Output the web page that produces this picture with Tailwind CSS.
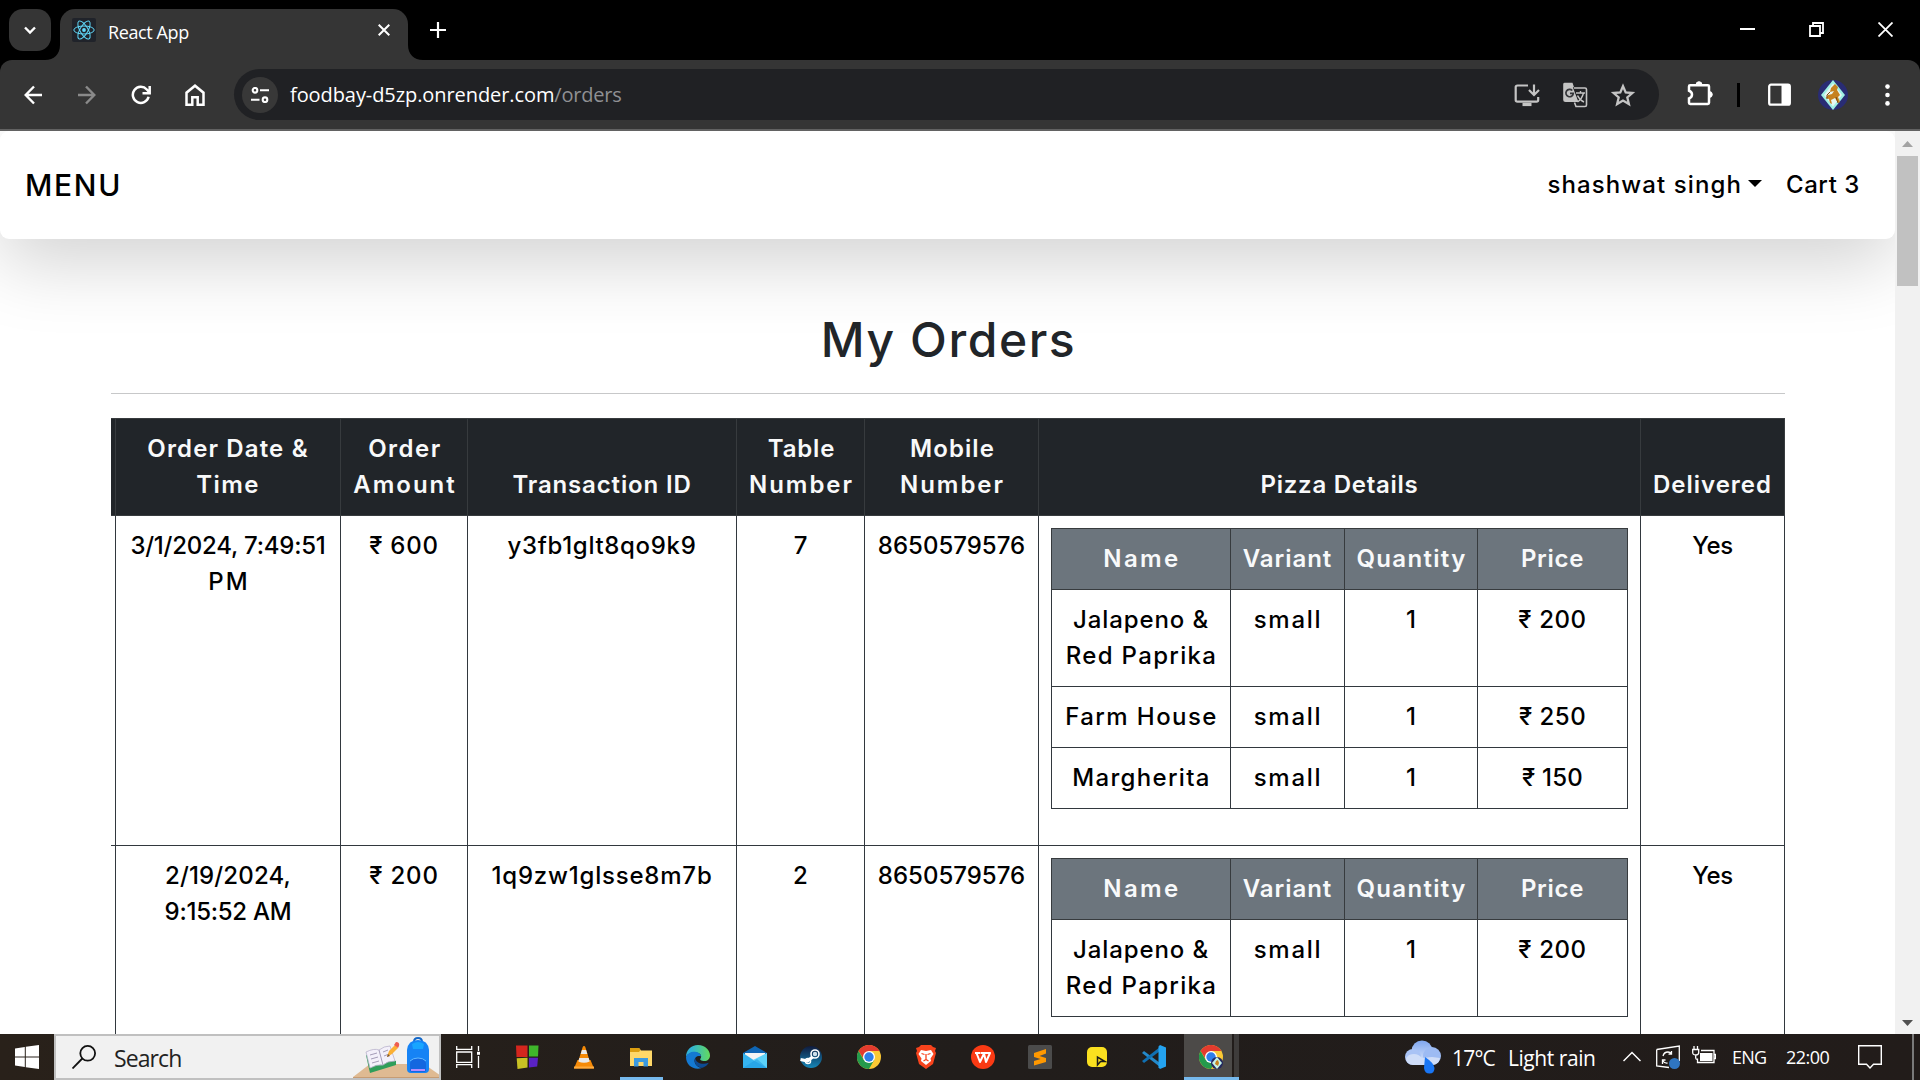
<!DOCTYPE html>
<html lang="en">
<head>
<meta charset="utf-8">
<title>React App</title>
<script src="https://cdn.jsdelivr.net/npm/@tailwindcss/browser@4"></script>
</head>
<body class="flex h-[1080px] w-[1920px] flex-col overflow-hidden bg-white font-['Open_Sans',sans-serif]">

<!-- Tab strip -->
<header class="flex h-[60px] shrink-0 bg-black text-white">
  <button class="mt-[9px] ml-[9px] flex h-[42px] w-[42px] items-center justify-center rounded-[14px] bg-[#353535]">
    <svg class="size-4" viewBox="0 0 16 16" fill="none" stroke="#fff" stroke-width="2.4"><path d="M3 5.500l5 5 5-5"/></svg>
  </button>
  <svg class="mt-[45px] -ml-[6px] h-[15px] w-[15px]" viewBox="0 0 15 15"><path d="M15 0V15H0C9 15 15 9 15 0z" fill="#353535"/></svg>
  <div class="mt-[9px] flex h-[51px] w-[348px] items-start rounded-t-[15px] bg-[#353535] pt-[9px] pl-3">
    <svg class="h-6 w-6" viewBox="0 0 24 24" fill="none" stroke="#61dafb"><rect width="24" height="24" rx="2" fill="#20232a" stroke="none"/><ellipse cx="12" cy="12" rx="10.200" ry="4"/><ellipse cx="12" cy="12" rx="10.200" ry="4" transform="rotate(60 12 12)"/><ellipse cx="12" cy="12" rx="10.200" ry="4" transform="rotate(120 12 12)"/><circle cx="12" cy="12" r="1.900" fill="#61dafb" stroke="none"/></svg>
    <span class="ml-3 text-[18px] leading-7 tracking-[-0.400px]">React App</span>
    <svg class="mt-[6px] mr-[18px] ml-auto size-3" viewBox="0 0 12 12" stroke="#fff" stroke-width="2"><path d="M.7.7l10.600 10.600M11.300.7L.7 11.300"/></svg>
  </div>
  <svg class="mt-[45px] h-[15px] w-[15px]" viewBox="0 0 15 15"><path d="M0 0V15H15C6 15 0 9 0 0z" fill="#353535"/></svg>
  <svg class="mt-[22px] ml-[7px] size-4" viewBox="0 0 16 16" stroke="#fff" stroke-width="2.200"><path d="M8 0v16M0 8h16"/></svg>
  <div class="mt-[22px] mr-[27px] ml-auto flex gap-[54px]">
    <svg class="size-[15px]" viewBox="0 0 15 15" stroke="#fff" stroke-width="2"><path d="M0 7h15"/></svg>
    <svg class="size-[15px]" viewBox="0 0 15 15" fill="none" stroke="#fff" stroke-width="1.800"><path d="M1 4h10v10H1zM4 4V1h10v10h-3"/></svg>
    <svg class="size-[15px]" viewBox="0 0 15 15" stroke="#fff" stroke-width="1.800"><path d="M.5.5l14 14M14.500.5l-14 14"/></svg>
  </div>
</header>

<!-- Toolbar -->
<div class="h-[71px] shrink-0 bg-black">
<div class="flex h-[71px] items-center rounded-t-[12px] border-b-2 border-[#626262] bg-[#353535]">
  <svg class="ml-[24px] h-5 w-[18px]" viewBox="0 0 18 20" fill="none" stroke="#fff" stroke-width="2.400"><path d="M18 10H2M10 1.500L1.700 10 10 18.500"/></svg>
  <svg class="ml-[36px] h-5 w-[18px]" viewBox="0 0 18 20" fill="none" stroke="#8a8a8a" stroke-width="2.400"><path d="M0 10h16M8 1.500l8.300 8.500L8 18.500"/></svg>
  <svg class="ml-[35px] size-5" viewBox="0 0 20 20" fill="none" stroke="#fff" stroke-width="2.500"><path d="M17.600 11.800A8 8 0 1 1 15.800 4.500L18 7M18.700 1v7.200h-7.200"/></svg>
  <svg class="ml-[34px] h-[22px] w-5" viewBox="0 0 20 22" fill="none" stroke="#fff" stroke-width="2.500"><path d="M1.500 20.700V8.700L10 1.700l8.500 7v12h-5.800v-7.400H7.300v7.400z"/></svg>
  <div class="ml-[29px] flex h-[51px] w-[1425px] items-center rounded-full bg-[#202124] pl-2">
    <div class="flex size-9 items-center justify-center rounded-full bg-[#383838]">
      <svg class="h-4 w-[18px]" viewBox="0 0 18 16" fill="none" stroke="#fff" stroke-width="2.100"><circle cx="4" cy="3.300" r="2.300"/><path d="M9 3.300h9M0 12.700h8.500"/><circle cx="14" cy="12.700" r="2.300"/></svg>
    </div>
    <span class="ml-[12px] text-[20px] leading-7 tracking-[-0.080px] text-white">foodbay-d5zp.onrender.com<span class="tracking-[-0.200px] text-[#8f9093]">/orders</span></span>
    <svg class="mr-[22px] ml-auto h-[24px] w-[26px]" viewBox="0 0 26 24" fill="none" stroke="#c4c4c4" stroke-width="2.200"><path d="M14 2.500H3.500Q1.700 2.500 1.700 4v13q0 1.600 1.800 1.600h19q1.700 0 1.700-1.600v-3M20 1.500v9.700M15 7l5 5 5-5"/><path d="M8.500 21.500h9" stroke-width="3.200"/></svg>
    <svg class="mr-[22px] size-[26px]" viewBox="0 0 26 26"><path d="M2.500.8h8L17 20H3.500Q1.200 20 1.200 18V2.500Q1 .8 2.500.8z" fill="#c4c4c4"/><path d="M10.800 5.300H24.500V24.500H14l-2-4.500h4.500z" fill="#202124"/><path d="M12 6h11q1.500 0 1.500 1.500V23q0 1.500-1.500 1.500h-9l-1.500-4" fill="none" stroke="#c4c4c4" stroke-width="1.600"/><path d="M14 11h9M18.500 9v2M21.500 11q-1.500 6-6 9M15.500 13.500q2 4.500 6.500 6.500" fill="none" stroke="#c4c4c4" stroke-width="1.400"/><path d="M10.300 8.500A3.700 3.700 0 1 0 11.300 11.400H8" fill="none" stroke="#35363a" stroke-width="1.700"/></svg>
    <svg class="mr-[23px] h-6 w-[26px]" viewBox="0 0 26 24" fill="none" stroke="#c4c4c4" stroke-width="2.300"><path d="M13 3.200l2.700 6.200 6.700.6-5.100 4.400 1.600 6.600-5.900-3.500L7.100 21l1.600-6.600L3.600 10l6.700-.6z"/></svg>
  </div>
  <svg class="-mt-[2px] ml-[27px] size-[27px]" viewBox="0 0 27 27" fill="none" stroke="#fff" stroke-width="2.500"><path d="M4.200 5.200h17.600q1.200 0 1.200 1.200v16.400q0 1.200-1.200 1.200H4.200Q3 24 3 22.800v-4.300q3-1 3-3.900t-3-3.900V6.400q0-1.200 1.200-1.200z"/><path d="M10 5a3 3.300 0 0 1 6 0zM23 11.500a3.300 3 0 0 1 0 6z" fill="#fff" stroke-width="1"/></svg>
  <span class="ml-[24px] h-6 w-[3px] bg-black"></span>
  <svg class="ml-[28px] h-[23px] w-[23px]" viewBox="0 0 23 23"><rect x="1.200" y="1.700" width="20.600" height="20" rx="1.800" fill="none" stroke="#fff" stroke-width="2.300"/><path d="M13.500 2h8v19.500h-8z" fill="#fff"/></svg>
  <svg class="ml-[27px] size-[30px]" viewBox="0 0 30 30"><circle cx="15" cy="15" r="15" fill="#292c74"/><path d="M15 0l12 15-12 15L3 15z" fill="#9ff0e4"/><path d="M15 3.500L24 15l-9 11.500L6 15z" fill="#e6f7f2"/><path d="M13 8l4-4 3 3-1 3 3 5-2 2 2 5-2 1-3-5-4 2 1 4-2-1-1-4-3-1 2-3 4-1 2-3-4 1z" fill="#c6821f"/><path d="M12 12l-3 3v4M18 17l2 6" stroke="#7a4a12" fill="none"/></svg>
  <svg class="ml-[37px] h-[22px] w-[5px]" viewBox="0 0 5 22" fill="#fff"><circle cx="2.500" cy="2.600" r="2.300"/><circle cx="2.500" cy="11" r="2.300"/><circle cx="2.500" cy="19.400" r="2.300"/></svg>
</div>
</div>

<!-- Page -->
<div class="flex h-[903px] shrink-0 overflow-hidden">
  <main class="h-[903px] w-[1895px] overflow-hidden bg-white font-['Inter',sans-serif] text-[24px] leading-9 font-medium text-black">
    <nav class="flex h-[108px] items-center rounded-[9px] bg-white pr-[35px] pl-[25px] shadow-[0_24px_72px_rgba(0,0,0,0.175)]">
      <span class="text-[30px] tracking-[1.700px]">MENU</span>
      <span class="ml-auto tracking-[1.100px]">shashwat singh</span>
      <svg class="mt-[-3px] ml-[6px] h-[7px] w-[14px]" viewBox="0 0 14 7"><path d="M0 0h14L7 7z"/></svg>
      <span class="ml-[24px] tracking-[0.580px]">Cart 3</span>
    </nav>
    <h1 class="mt-[72px] pl-[2px] text-center text-[48px] leading-[58px] tracking-[1.600px] text-[#212529]">My Orders</h1>
    <hr class="mx-auto mt-[24px] h-px w-[1674px] border-0 bg-[#c7c8c9]">
    <table class="mt-[24px] ml-[111px] w-[1673.500px] table-fixed border-collapse text-center [&_td]:border [&_td]:border-[#32383e] [&_td]:p-3 [&_td]:align-top [&_th]:border [&_th]:border-[#373b3e] [&_th]:p-3 [&_th]:align-bottom [&_th]:font-semibold [&_th]:text-[#f8f9fa]">
      <colgroup><col class="w-[4.500px]"><col class="w-[225px]"><col class="w-[127px]"><col class="w-[269px]"><col class="w-[128px]"><col class="w-[174px]"><col class="w-[602px]"><col class="w-[144px]"></colgroup>
      <thead class="bg-[#212529]">
        <tr>
          <th class="border-l-0! p-0!"></th>
          <th><span class="tracking-[1.140px]">Order Date &amp;</span><br><span class="tracking-[1.400px]">Time</span></th>
          <th class="pr-1! pl-1.5!"><span class="tracking-[1.500px]">Order</span><br><span class="tracking-[2px]">Amount</span></th>
          <th><span class="tracking-[0.850px]">Transaction ID</span></th>
          <th class="pr-1! pl-1.5!"><span class="tracking-[0.820px]">Table</span><br><span class="tracking-[1.960px]">Number</span></th>
          <th class="pr-2.5!"><span class="tracking-[1.100px]">Mobile</span><br><span class="tracking-[1.960px]">Number</span></th>
          <th><span class="tracking-[0.720px]">Pizza Details</span></th>
          <th class="px-2!"><span class="tracking-[1px]">Delivered</span></th>
        </tr>
      </thead>
      <tbody>
        <tr>
          <td class="border-l-0! p-0!"></td>
          <td><span class="tracking-[-0.220px]">3/1/2024, 7:49:51</span><br><span class="-mr-[2px] tracking-[2.200px]">PM</span></td>
          <td><span class="tracking-[0.800px]">₹ 600</span></td>
          <td><span class="tracking-[0.670px]">y3fb1glt8qo9k9</span></td>
          <td>7</td>
          <td>8650579576</td>
          <td>
            <table class="mb-6 w-[576px] table-fixed border-collapse">
              <colgroup><col class="w-[179px]"><col class="w-[114px]"><col class="w-[133px]"><col class="w-[150px]"></colgroup>
              <thead class="bg-[#6c757d]"><tr>
                <th><span class="-mr-[2px] tracking-[2.400px]">Name</span></th><th class="px-1!"><span class="tracking-[0.950px]">Variant</span></th><th class="px-1!"><span class="-mr-px tracking-[1.330px]">Quantity</span></th><th><span class="tracking-[0.670px]">Price</span></th>
              </tr></thead>
              <tbody>
                <tr><td><span class="tracking-[0.890px]">Jalapeno &amp;</span><br><span class="-mr-px tracking-[1.320px]">Red Paprika</span></td><td><span class="-mr-px tracking-[1.720px]">small</span></td><td>1</td><td><span class="tracking-[0.600px]">₹ 200</span></td></tr>
                <tr><td><span class="-mr-px tracking-[1.420px]">Farm House</span></td><td><span class="-mr-px tracking-[1.720px]">small</span></td><td>1</td><td><span class="tracking-[0.500px]">₹ 250</span></td></tr>
                <tr><td><span class="-mr-px tracking-[1.320px]">Margherita</span></td><td><span class="-mr-px tracking-[1.720px]">small</span></td><td>1</td><td><span class="tracking-[0.250px]">₹ 150</span></td></tr>
              </tbody>
            </table>
          </td>
          <td><span class="tracking-[-0.350px]">Yes</span></td>
        </tr>
        <tr>
          <td class="border-l-0! p-0!"></td>
          <td><span class="tracking-[0.130px]">2/19/2024,</span><br><span class="tracking-[-0.260px]">9:15:52 AM</span></td>
          <td><span class="tracking-[0.800px]">₹ 200</span></td>
          <td><span class="tracking-[0.800px]">1q9zw1glsse8m7b</span></td>
          <td>2</td>
          <td>8650579576</td>
          <td>
            <table class="mb-6 w-[576px] table-fixed border-collapse">
              <colgroup><col class="w-[179px]"><col class="w-[114px]"><col class="w-[133px]"><col class="w-[150px]"></colgroup>
              <thead class="bg-[#6c757d]"><tr>
                <th><span class="-mr-[2px] tracking-[2.400px]">Name</span></th><th class="px-1!"><span class="tracking-[0.950px]">Variant</span></th><th class="px-1!"><span class="-mr-px tracking-[1.330px]">Quantity</span></th><th><span class="tracking-[0.670px]">Price</span></th>
              </tr></thead>
              <tbody>
                <tr><td><span class="tracking-[0.890px]">Jalapeno &amp;</span><br><span class="-mr-px tracking-[1.320px]">Red Paprika</span></td><td><span class="-mr-px tracking-[1.720px]">small</span></td><td>1</td><td><span class="tracking-[0.600px]">₹ 200</span></td></tr>
              </tbody>
            </table>
          </td>
          <td><span class="tracking-[-0.350px]">Yes</span></td>
        </tr>
      </tbody>
    </table>
  </main>
  <!-- Scrollbar -->
  <div class="flex w-[25px] flex-col items-center bg-[#f1f1f1]">
    <svg class="mt-[10px] h-[6px] w-[11px]" viewBox="0 0 11 6"><path d="M0 6h11L5.500 0z" fill="#a3a3a3"/></svg>
    <div class="mt-[9px] h-[130px] w-[21px] bg-[#c1c1c1]"></div>
    <svg class="mt-auto mb-[8px] h-[6px] w-[11px]" viewBox="0 0 11 6"><path d="M0 0h11L5.500 6z" fill="#505050"/></svg>
  </div>
</div>

<!-- Taskbar -->
<footer class="flex h-[46px] shrink-0 bg-linear-to-r from-[#29211a] via-[#211d1b] via-50% to-[#221c1a] text-white">
  <div class="flex w-[54px] items-center justify-center">
    <svg class="size-6" viewBox="0 0 24 24" fill="#fff"><path d="M0 3.400L9.800 2v9.400H0zM10.800 1.800L24 0v11.400H10.800zM0 12.400h9.800V22L0 20.600zM10.800 12.400H24V24l-13.200-1.800z"/></svg>
  </div>
  <div class="flex w-[387px] items-center overflow-hidden border-2 border-[#c0c0c0] bg-[#f1f1f1] pl-4">
    <svg class="size-6" viewBox="0 0 24 24" fill="none" stroke="#111" stroke-width="1.800"><circle cx="15.700" cy="8.300" r="7.400"/><path d="M10.300 13.500L.5 23.500"/></svg>
    <span class="mt-[2px] ml-[18px] text-[23px] leading-8 tracking-[-0.900px] text-[#222]">Search</span>
    <svg class="-mr-[2px] ml-auto h-[46px] w-[88px] shrink-0" viewBox="0 0 88 46">
      <path d="M0 43L17 30h54l17 12v4H0z" fill="#dfba92"/><path d="M0 43h88v3H0z" fill="#c69c74"/>
      <path d="M13 21l3 14 1 4 26-8v-4z" fill="#2f9e5a"/><path d="M13 18q8-4 13-2 5-4 11-4l5 15q-8 0-12 4-6-1-13 3z" fill="#f3f0fa" stroke="#b9b3cc" stroke-width=".8"/><path d="M26 16l4 15M17 21l7-2M18 25l7-2M19 29l7-2M30 18l5-2M31 22l5-2" stroke="#a59db8" stroke-width="1" fill="none"/>
      <path d="M34 23l2-6 6-6 3 3-6 6z" fill="#fbb034"/><path d="M34 23l1-3 2 2z" fill="#7a5230"/><path d="M41 11l2-3q4 0 3 4l-1 2z" fill="#ee5d50"/>
      <path d="M61 8q0-4 4-4t4 4" fill="none" stroke="#1267c9" stroke-width="2"/><path d="M54 16q1-10 11-10t11 10v19q0 4-4 4H58q-4 0-4-4z" fill="#1683f5"/><path d="M59 10q6-4 12 0l-1 5H60z" fill="#18a5ff"/><path d="M57 36v-6q0-6 8-6t8 6v6q0 2-3 2H60q-3 0-3-2z" fill="#1467e0"/><path d="M57 27q3-3 8-3t8 3" fill="none" stroke="#63b9ff"/><path d="M58 36h14" stroke="#b48cff" stroke-width="2"/>
    </svg>
  </div>
  <div class="flex w-[57px] items-center pl-[15px]">
    <svg class="size-6" viewBox="0 0 24 24" fill="none" stroke="#fff" stroke-width="1.300"><path d="M.7 1v3.300h15V1M.7 7h15v10.300h-15zM.7 23v-3.300h15V23M22.500 1v5M22.500 11v12"/><path d="M21 6.800h3v3h-3z" fill="#fff" stroke="none"/></svg>
  </div>
  <div class="flex [&>div]:flex [&>div]:w-[57px] [&>div]:items-center [&>div]:justify-center">
    <div><svg class="size-6" viewBox="0 0 24 24"><path d="M1 .5h11.500v11.500H1.500z" fill="#d4261e"/><path d="M14 .5h9.500l-.5 11h-9z" fill="#3fb62b"/><path d="M1.700 13.300l10.800-.5v9.700l-10 1.500z" fill="#c8c224"/><path d="M14 12.700h9l-.8 8.800-8.200 1z" fill="#5a22c4"/></svg></div>
    <div><svg class="size-6" viewBox="0 0 24 24"><path d="M5.500 15h13l3.500 8.500H2z" fill="#f58a07"/><path d="M2 21.500h20v2H2z" fill="#ffab3d"/><path d="M12 1q1 0 1.300 1l4.700 15q-6 3-12 0L10.700 2Q11 1 12 1z" fill="#f58a07"/><path d="M9.900 5h4.200l1.200 4H8.700zM7.300 13h9.400l1 3.500q-5.700 2.500-11.400 0z" fill="#e9e9e9"/></svg></div>
    <div class="relative"><svg class="size-6" viewBox="0 0 24 24"><path d="M1 3h9l2 2.500h11V21H1z" fill="#ffd869"/><path d="M1 3h9l1.500 2L10 7H1z" fill="#dd9f10"/><path d="M5 13h14v8.500h-4.500V17h-5v4.500H5z" fill="#3c9ae0"/></svg><i class="absolute bottom-0 left-[8px] h-[3px] w-[43px] bg-[#76b9ed]"></i></div>
    <div><svg class="size-6" viewBox="0 0 24 24"><defs><linearGradient id="wave"><stop offset=".2" stop-color="#2fb2d8"/><stop offset="1" stop-color="#63da5c"/></linearGradient></defs><path d="M0 12C0 5 5 0 12 0c7.500 0 12 5.500 12 10.500 0 3.500-2.500 5.500-5.500 5.500-3.500 0-5-1.200-4-2.500C16.500 10.500 14 8 10 7.500 5 7 1.500 8.500 0 12z" fill="url(#wave)"/><path d="M0 12C1 8.500 5 6.500 9 6.700c3.500.3 6 2.500 6 4.800-3-1.500-6.500.5-6.500 4 0 4 3.500 7.500 8 7.300C8 26 0 20.500 0 12z" fill="#1479d2"/><path d="M9.200 13c-2 5 2 9.500 7.300 9.800 3-1 5-3 6.300-5-6 2.500-13 .5-13.600-4.800z" fill="#0d4b94"/></svg></div>
    <div><svg class="size-6" viewBox="0 0 24 24"><path d="M0 8L12 1l12 7v5H0z" fill="#0f66b5"/><path d="M2 8h20v9H2z" fill="#f4f4f4"/><path d="M0 8l12 8L24 8v15H0z" fill="#35b4f0"/><path d="M24 8v15L10 15z" fill="#5cd2fa"/><path d="M0 23l14-9 10 9z" fill="#1b97e0" fill-opacity=".5"/></svg></div>
    <div><svg class="size-6" viewBox="0 0 24 24"><defs><linearGradient id="steam" x2="0" y2="1"><stop stop-color="#101a3c"/><stop offset="1" stop-color="#1587b8"/></linearGradient></defs><circle cx="11" cy="12" r="11" fill="url(#steam)"/><path d="M.500 14.500l7 1.500 5-4" stroke="#fff" stroke-width="3.200" fill="none"/><circle cx="15" cy="9" r="4" fill="none" stroke="#fff" stroke-width="1.600"/><circle cx="15" cy="9" r="2.200" fill="#cfe0ea"/><circle cx="8" cy="16" r="2.600" fill="none" stroke="#fff" stroke-width="1.400"/></svg></div>
    <div><svg class="size-6" viewBox="0 0 24 24"><circle cx="12" cy="12" r="12" fill="#fcc934"/><path d="M1.600 6A12 12 0 0 1 22.400 6H12L7 14.500z" fill="#e33b2e"/><path d="M1.600 6A12 12 0 0 0 12 24l5.200-9H6.800z" fill="#249a4c"/><circle cx="12" cy="12" r="6" fill="#fff"/><circle cx="12" cy="12" r="4.700" fill="#2f7de9"/></svg></div>
    <div><svg class="size-6" viewBox="0 0 24 24"><path d="M7 0h10l2 2 3 1-1 3 1 2-3 11-7 5-7-5L2 8l1-2-1-3 3-1z" fill="#f8431c"/><path d="M7 5l5 1 5-1 2.500 4-3 4.500.5 2.500-5 4-5-4 .5-2.500-3-4.500z" fill="#fff"/><path d="M7.500 8.500l3 1M16.500 8.500l-3 1M12 9v5M9.500 16l2.500-1.500 2.500 1.500" stroke="#f8431c" stroke-width="1.300" fill="none"/></svg></div>
    <div><svg class="size-6" viewBox="0 0 24 24"><circle cx="12" cy="12" r="12" fill="#fa3a14"/><path d="M4 8h5M5.500 8L9 17l4-8.500 2 8.500 4-9h-9.500" fill="none" stroke="#fff" stroke-width="2" stroke-linejoin="round"/></svg></div>
    <div><svg class="size-6" viewBox="0 0 24 24"><rect width="24" height="24" rx="1.500" fill="#4b4b4b"/><path d="M18 4v4.500L11.500 11l6.500 2v4L6 20.500V16l6.500-2L6 12V8z" fill="#ff9800"/></svg></div>
    <div><svg class="size-6" viewBox="0 0 24 24"><rect x="2" y="2" width="20" height="20" rx="5" fill="#fae01f"/><path d="M12.500 12v8l3-3.500h4.500z" fill="none" stroke="#1a1a1a" stroke-width="1.500"/></svg></div>
    <div><svg class="size-6" viewBox="0 0 24 24"><path d="M0 8l2-2 16 12v4z" fill="#2489ca"/><path d="M0 16l2 2L18 6V2z" fill="#1070b3"/><path d="M18 0l6 2.500v19L18 24l-1.500-1.500v-21z" fill="#24a3f0"/></svg></div>
  </div>
  <div class="relative ml-[2px] flex w-12 items-center justify-center bg-[#4c4a48] pl-[6px]">
    <svg class="size-6" viewBox="0 0 24 24"><circle cx="12" cy="12" r="12" fill="#fcc934"/><path d="M1.600 6A12 12 0 0 1 22.400 6H12L7 14.500z" fill="#e33b2e"/><path d="M1.600 6A12 12 0 0 0 12 24l5.200-9H6.800z" fill="#249a4c"/><circle cx="12" cy="12" r="6" fill="#fff"/><circle cx="12" cy="12" r="4.700" fill="#2f7de9"/><circle cx="18" cy="18" r="6" fill="#23285f"/><path d="M18 12l5 6-5 6-5-6z" fill="#c3f2e8"/><path d="M16 19l1-3 2-1 1 3-1 3z" fill="#c6821f"/></svg>
    <i class="absolute bottom-0 left-0 h-[3px] w-[55px] bg-[#76b9ed]"></i>
  </div>
  <div class="ml-[2px] h-[43px] w-[5px] bg-[#3e3c3b]"></div>

  <div class="mr-[6px] ml-auto flex items-center">
    <svg class="h-[34px] w-9" viewBox="0 0 36 34"><defs><linearGradient id="cloud" x2="0" y2="1"><stop stop-color="#7fa6ee"/><stop offset="1" stop-color="#d3e1fb"/></linearGradient></defs><circle cx="17" cy="11" r="10.500" fill="url(#cloud)"/><circle cx="8" cy="17" r="8" fill="#a9c3f5"/><circle cx="27" cy="16" r="9" fill="#9dbbf3"/><path d="M4 15q8-3 13 3l10-1 8 1q-1 7-8 7H8q-7-1-7-7z" fill="#cfddf8"/><path d="M20 17q9 6 9.500 11 0 5.500-5 5.500T19 28z" fill="#1976f5"/></svg>
    <span class="mt-[2px] ml-[11px] w-[56px] text-[21px] leading-8 tracking-[-0.800px] whitespace-pre">17°C</span>
    <span class="mt-[2px] w-[88px] text-[21px] leading-8 tracking-[-0.450px]">Light rain</span>
    <svg class="mt-[-2px] ml-[27px] h-[11px] w-[18px]" viewBox="0 0 18 11" fill="none" stroke="#fff" stroke-width="1.500"><path d="M.5 10L9 1.500l8.500 8.500"/></svg>
    <svg class="ml-[15px] h-6 w-6" viewBox="0 0 24 24" fill="none" stroke="#fff" stroke-width="1.300"><path d="M.7 4.500l22.600-3.500v15M13 22.500L.7 21V4.500"/><path d="M7 11q1-4 5-4 2 0 3.500 2M15.500 6v3.200h-3M6.500 19v-4h3M6.500 15.500q2 3 5 2.500"/><circle cx="18.500" cy="18.500" r="5.500" fill="#2f75c0" stroke="none"/></svg>
    <svg class="mt-[-4px] ml-[12px] h-[18px] w-6" viewBox="0 0 24 18" fill="none" stroke="#fff" stroke-width="1.300"><path d="M9 4.500h13v12H5.500v-4M22.500 8.500h1v4h-1M2 0v3M5.500 0v3M.7 3.500h6v3q0 2.500-3 2.500T.7 6.500zM3.700 9v3q0 1.500 2 1.500"/><path d="M8 7h12.500v8H8z" fill="#fff" stroke="none"/></svg>
    <span class="ml-[16px] w-[54px] text-[18px] leading-7 tracking-[-0.780px]">ENG</span>
    <span class="w-[46px] text-[18px] leading-7 tracking-[-0.550px]">22:00</span>
    <svg class="ml-[26px] size-6" viewBox="0 0 24 24" fill="none" stroke="#fff" stroke-width="1.400"><path d="M.7.700h22.600v18.600h-7.800L12 23l-3.500-3.700H.7z"/></svg>
    <i class="ml-[30px] h-[46px] w-[2px] bg-[#7a7a7a]"></i>
  </div>
</footer>
</body>
</html>
